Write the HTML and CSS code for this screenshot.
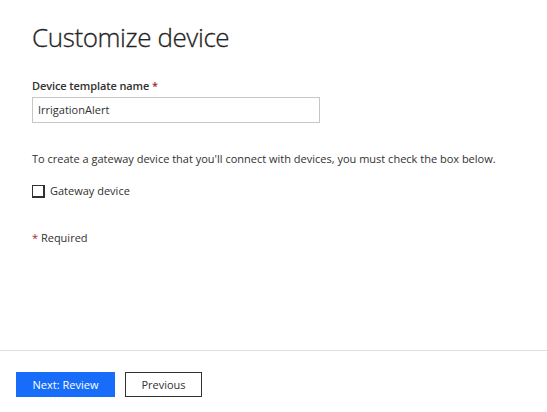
FILE: index.html
```html
<!DOCTYPE html>
<html lang="en">
<head>
<meta charset="utf-8">
<title>Customize device</title>
<link rel="stylesheet" href="styles.css">
</head>
<body>
<div class="page">
  <main class="content">
    <h1 class="title">Customize device</h1>
    <div class="field">
      <label class="label">Device template name <span class="req">*</span></label>
      <div class="input">IrrigationAlert</div>
    </div>
    <p class="note">To create a gateway device that you'll connect with devices, you must check the box below.</p>
    <label class="check"><span class="box"></span><span>Gateway device</span></label>
    <p class="required"><span class="req">*</span> Required</p>
  </main>
  <footer class="footer">
    <button class="btn btn-primary">Next: Review</button>
    <button class="btn btn-secondary">Previous</button>
  </footer>
</div>
</body>
</html>
```
FILE: styles.css
```css
* { box-sizing: border-box; }
html, body { margin: 0; padding: 0; background: #fff; }
body {
  font-family: "Open Sans", "Noto Sans", sans-serif;
  font-size: 11px;
  color: #323130;
}
.page {
  width: 547px;
  height: 412px;
  display: flex;
  flex-direction: column;
}
.content {
  flex: 1;
  padding: 0 32px;
  display: flex;
  flex-direction: column;
  align-items: flex-start;
}
.title {
  margin: 19px 0 0;
  font-size: 26px;
  line-height: 36px;
  font-weight: 300;
  letter-spacing: -0.4px;
  color: #252423;
  -webkit-text-stroke: 0.3px #252423;
}
.field {
  margin-top: 23px;
  display: flex;
  flex-direction: column;
  gap: 3px;
}
.label {
  font-size: 11px;
  line-height: 16px;
  font-weight: 600;
  letter-spacing: -0.1px;
}
.req { color: #a4262c; }
.input {
  width: 288px;
  height: 26px;
  border: 1px solid #c8c6c4;
  padding: 4px 5px;
  line-height: 16px;
}
.note {
  margin: 28px 0 0;
  line-height: 16px;
}
.check {
  margin-top: 16px;
  display: flex;
  align-items: center;
  gap: 5px;
  line-height: 16px;
}
.box {
  width: 13px;
  height: 13px;
  border: 1px solid #323130;
  border-right-width: 2px;
  border-bottom-width: 2px;
  background: #fff;
}
.required {
  margin: 31px 0 0;
  line-height: 16px;
}
.footer {
  height: 62px;
  border-top: 1px solid #e1dfdd;
  padding: 21px 16px 0;
  display: flex;
  gap: 10px;
  align-items: flex-start;
}
.btn {
  height: 25px;
  font-family: inherit;
  font-size: 11px;
  padding: 0;
  border-radius: 0;
  cursor: pointer;
}
.btn-primary {
  width: 99px;
  background: #176df9;
  border: 1px solid #176df9;
  color: #fff;
}
.btn-secondary {
  width: 77px;
  background: #fff;
  border: 1px solid #323130;
  color: #323130;
}
```
